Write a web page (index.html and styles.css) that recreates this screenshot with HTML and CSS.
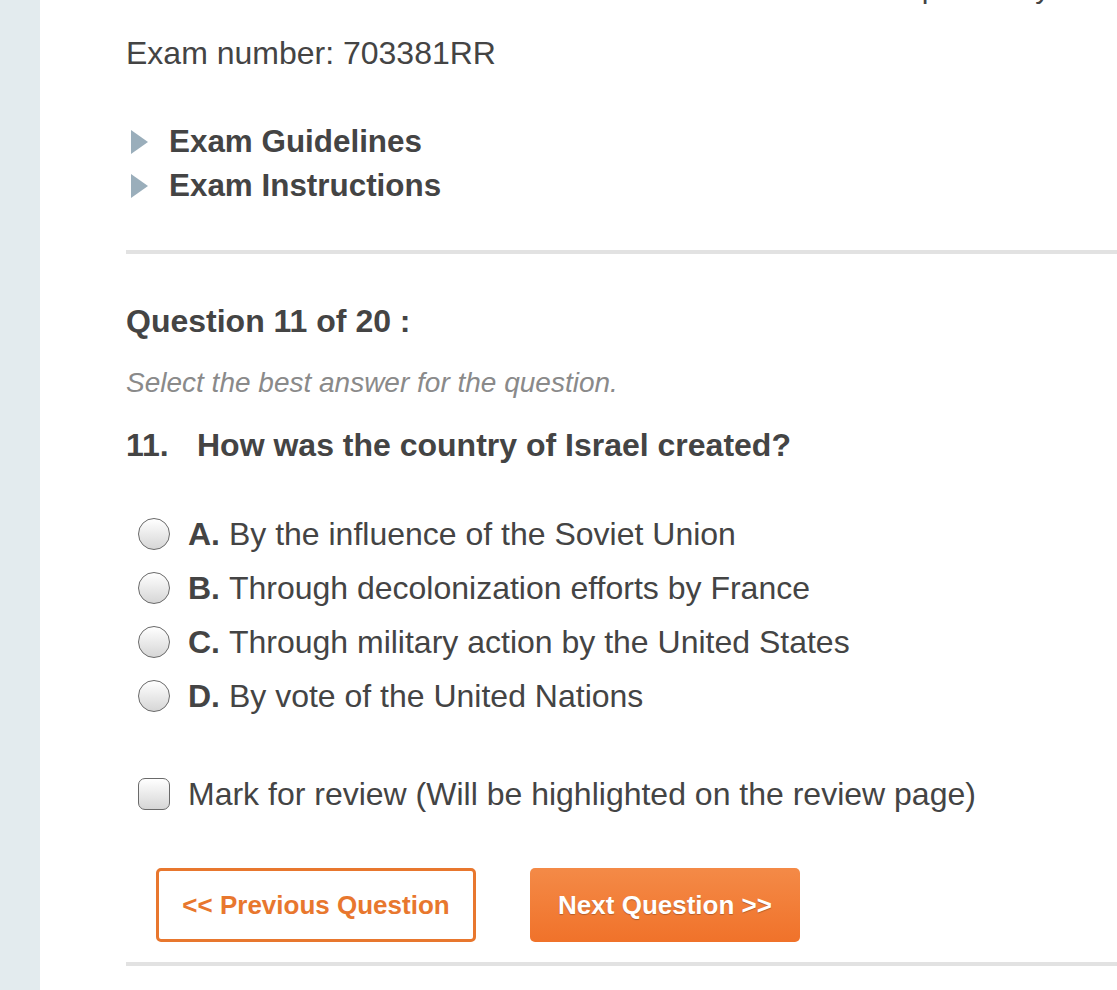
FILE: index.html
```html
<!DOCTYPE html>
<html>
<head>
<meta charset="utf-8">
<link rel="stylesheet" href="styles.css">
</head>
<body>
<div class="page">
  <aside class="sidebar"></aside>
  <main class="content">
    <div class="cut-line">Please complete it by the due date.</div>
    <p class="exam-number">Exam number: 703381RR</p>
    <ul class="toggles">
      <li><span class="tri"></span>Exam Guidelines</li>
      <li><span class="tri"></span>Exam Instructions</li>
    </ul>
    <hr class="rule">
    <h2 class="q-count">Question 11 of 20 :</h2>
    <p class="hint">Select the best answer for the question.</p>
    <h3 class="q-text"><span class="q-num">11.</span>How was the country of Israel created?</h3>
    <ul class="options">
      <li><span class="radio"></span><b>A.</b>&nbsp;By the influence of the Soviet Union</li>
      <li><span class="radio"></span><b>B.</b>&nbsp;Through decolonization efforts by France</li>
      <li><span class="radio"></span><b>C.</b>&nbsp;Through military action by the United States</li>
      <li><span class="radio"></span><b>D.</b>&nbsp;By vote of the United Nations</li>
    </ul>
    <div class="review"><span class="check"></span>Mark for review (Will be highlighted on the review page)</div>
    <div class="buttons">
      <button class="btn btn-prev">&lt;&lt; Previous Question</button>
      <button class="btn btn-next">Next Question &gt;&gt;</button>
    </div>
    <hr class="rule rule-bottom">
  </main>
</div>
</body>
</html>
```
FILE: styles.css
```css
html, body {
  margin: 0;
  padding: 0;
  background: #fff;
}
body {
  font-family: "Liberation Sans", Arial, sans-serif;
  color: #444;
}
.page {
  display: flex;
  min-height: 990px;
  overflow: hidden;
}
.sidebar {
  width: 40px;
  flex: 0 0 40px;
  background: #e3ebee;
}
.content {
  flex: 1;
  padding-left: 86px;
  overflow: hidden;
}
.cut-line {
  margin-top: -29px;
  height: 34px;
  padding-left: 639px;
  font-size: 30px;
  line-height: 34px;
  white-space: nowrap;
  overflow: hidden;
  color: #444;
}
.exam-number {
  margin: 30px 0 0 0;
  font-size: 32px;
  line-height: 36px;
}
.toggles {
  list-style: none;
  margin: 49px 0 0 0;
  padding: 0;
}
.toggles li {
  display: flex;
  align-items: center;
  font-size: 31.4px;
  font-weight: bold;
  line-height: 44px;
}
.tri {
  width: 0;
  height: 0;
  border-top: 12px solid transparent;
  border-bottom: 12px solid transparent;
  border-left: 17px solid #9aaebb;
  margin-left: 5px;
  margin-right: 21px;
}
.rule {
  border: 0;
  height: 4px;
  background: #e2e2e2;
  margin: 42px 0 0 0;
}
.q-count {
  margin: 49px 0 0 0;
  font-size: 32px;
  line-height: 36px;
  font-weight: bold;
}
.hint {
  margin: 27px 0 0 0;
  font-size: 28px;
  line-height: 34px;
  font-style: italic;
  color: #8a8a8a;
}
.q-text {
  margin: 27px 0 0 0;
  font-size: 32px;
  line-height: 36px;
  font-weight: bold;
}
.q-num {
  display: inline-block;
  width: 71px;
}
.options {
  list-style: none;
  margin: 44px 0 0 0;
  padding: 0;
}
.options li {
  display: flex;
  align-items: center;
  height: 54px;
  font-size: 32px;
}
.options b {
  font-weight: bold;
}
.radio {
  width: 32px;
  height: 32px;
  border: 1.5px solid #6a6a6a;
  border-radius: 50%;
  background: linear-gradient(#ffffff, #d6d6d6);
  margin-left: 12px;
  margin-right: 18px;
  box-sizing: border-box;
  flex: 0 0 auto;
}
.review {
  display: flex;
  align-items: center;
  margin-top: 44px;
  height: 54px;
  font-size: 32px;
}
.check {
  width: 32px;
  height: 32px;
  border: 1.5px solid #6a6a6a;
  border-radius: 7px;
  background: linear-gradient(#ffffff, #d6d6d6);
  margin-left: 12px;
  margin-right: 18px;
  box-sizing: border-box;
  flex: 0 0 auto;
}
.buttons {
  display: flex;
  gap: 54px;
  margin-top: 47px;
  padding-left: 30px;
}
.btn {
  font-family: "Liberation Sans", Arial, sans-serif;
  font-size: 26px;
  font-weight: bold;
  height: 74px;
  border-radius: 5px;
  box-sizing: border-box;
  cursor: pointer;
}
.btn-prev {
  width: 320px;
  background: #fff;
  color: #e8772e;
  border: 3px solid #e8772e;
}
.btn-next {
  width: 270px;
  background: linear-gradient(#f48a47, #f0722a);
  color: #fff;
  border: 0;
  text-shadow: 0 1px 1px rgba(0,0,0,0.25);
}
.rule-bottom {
  margin-top: 20px;
}
```
